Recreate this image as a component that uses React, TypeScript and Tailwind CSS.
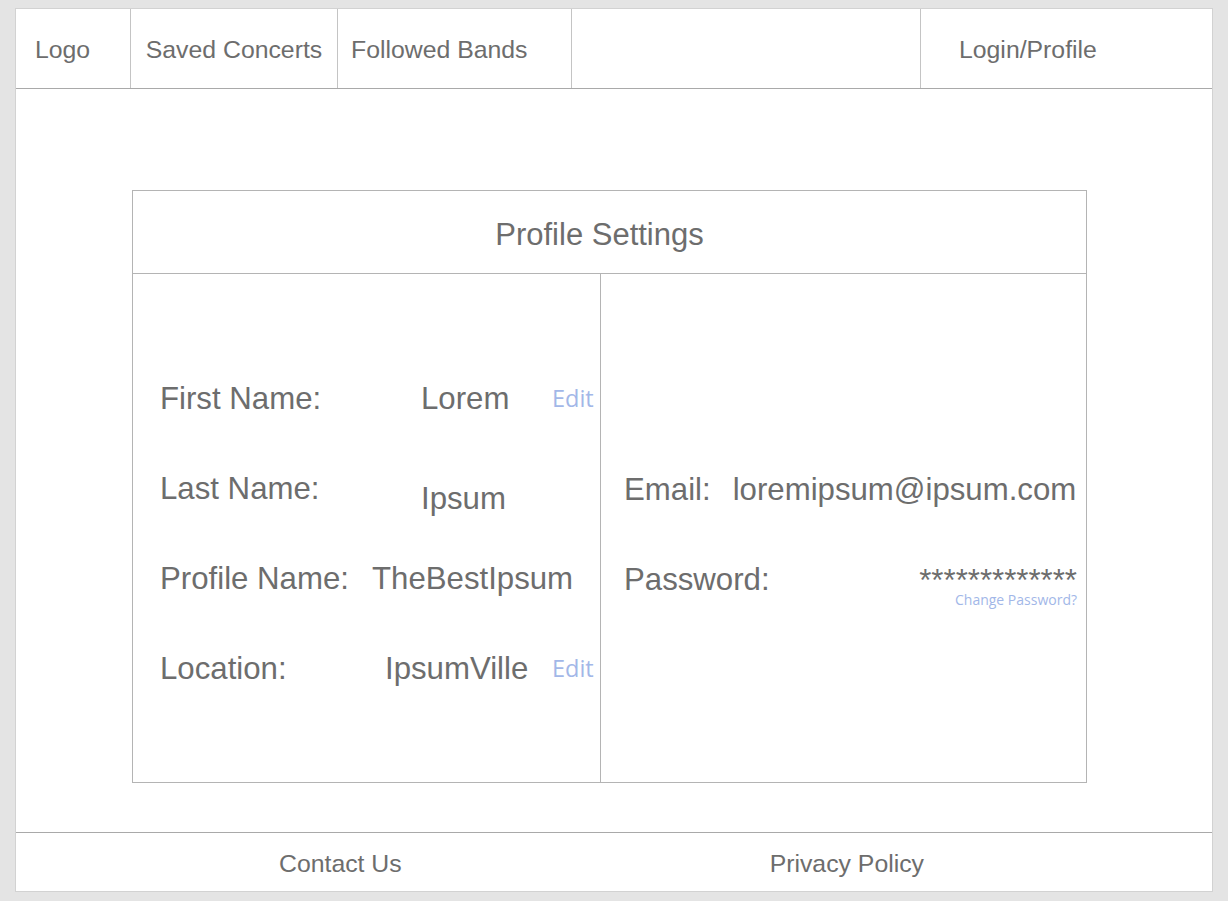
export default function App() {
  const rows = [
    { label: "First Name:", value: "Lorem", valuePad: "pl-[49px]", edit: true },
    { label: "Last Name:", value: "Ipsum", valuePad: "pl-[49px] pt-[20px]", edit: false },
    { label: "Profile Name:", value: "TheBestIpsum", valuePad: "pl-0", edit: false },
    { label: "Location:", value: "IpsumVille", valuePad: "pl-[13px]", edit: true },
  ];

  return (
    <div className="h-[901px] w-full bg-[#e4e4e4] pt-[8px] pl-[15px] font-['Liberation_Sans',Arial,sans-serif] text-[#6d6d6d]">
      <div className="flex h-[884px] w-[1198px] flex-col border border-[#d2d2d2] bg-white">
        {/* Header */}
        <header className="flex h-[80px] shrink-0 items-center border-b border-[#a9a9a9] text-[24.8px]">
          <div className="flex h-full w-[115px] items-center border-r border-[#c4c4c4] pt-[2px] pl-[19px]">Logo</div>
          <div className="flex h-full w-[207px] items-center justify-center border-r border-[#c4c4c4] pt-[2px]">Saved Concerts</div>
          <div className="flex h-full w-[234px] items-center border-r border-[#c4c4c4] pt-[2px] pl-[13px]">Followed Bands</div>
          <div className="h-full w-[349px] border-r border-[#c4c4c4]" />
          <div className="flex h-full flex-1 items-center pt-[2px] pl-[38px]">Login/Profile</div>
        </header>

        {/* Main */}
        <main className="flex-1 pt-[101px] pl-[116px]">
          <div className="flex h-[593px] w-[955px] flex-col border border-[#b4b4b4]">
            <div className="flex h-[83px] shrink-0 items-center justify-center border-b border-[#b4b4b4] pt-[6px] pr-[20px] text-[31px]">
              Profile Settings
            </div>
            <div className="flex flex-1">
              {/* Left column */}
              <div className="w-[468px] border-r border-[#b4b4b4] pt-[80px] pl-[27px] text-[31.2px]">
                {rows.map((r) => (
                  <div key={r.label} className="grid h-[90px] grid-cols-[212px_180px_auto] items-center">
                    <span>{r.label}</span>
                    <span className={r.valuePad}>{r.value}</span>
                    {r.edit ? (
                      <span className="pb-[1px] font-['Open_Sans',sans-serif] text-[23.5px] text-[#a2b7e8]">Edit</span>
                    ) : (
                      <span />
                    )}
                  </div>
                ))}
              </div>

              {/* Right column */}
              <div className="flex-1 pt-[171px] pl-[23px] pr-[9px] text-[31.2px]">
                <div className="flex h-[90px] items-center gap-[22px]">
                  <span>Email:</span>
                  <span>loremipsum@ipsum.com</span>
                </div>
                <div className="flex h-[90px] items-start justify-between">
                  <span className="mt-[27px] leading-[36px]">Password:</span>
                  <div className="mt-[36px] flex flex-col items-end">
                    <span className="leading-[20px]">*************</span>
                    <span className="mt-[1px] font-['Open_Sans',sans-serif] text-[14px] leading-[15px] text-[#a2b7e8]">
                      Change Password?
                    </span>
                  </div>
                </div>
              </div>
            </div>
          </div>
        </main>

        {/* Footer */}
        <footer className="flex h-[59px] shrink-0 items-center border-t border-[#a9a9a9] pt-[3px] pl-[263px] text-[24.8px]">
          <span>Contact Us</span>
          <span className="ml-[368px]">Privacy Policy</span>
        </footer>
      </div>
    </div>
  );
}
